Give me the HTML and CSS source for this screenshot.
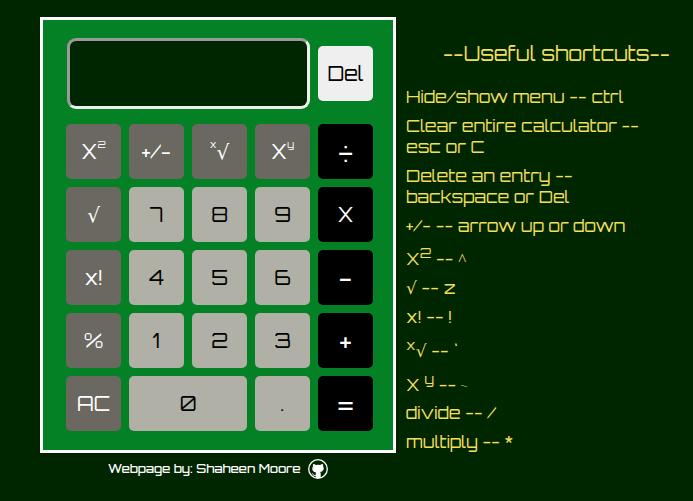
FILE: index.html
```html
<!DOCTYPE html>
<html lang="en">
<head>
<meta charset="utf-8">
<title>Calculator</title>
<link rel="stylesheet" href="styles.css">
</head>
<body>
<main class="page">
  <section class="left">
    <div class="calculator">
      <div class="top"><div class="display"></div><button class="key del">Del</button></div>
      <div class="keys">
        <button class="key fn"><span>X<sup>2</sup></span></button>
        <button class="key fn">+/-</button>
        <button class="key fn"><span><sup>x</sup>√</span></button>
        <button class="key fn"><span>X<sup>y</sup></span></button>
        <button class="key op big">÷</button>
        <button class="key fn">√</button>
        <button class="key num">7</button>
        <button class="key num">8</button>
        <button class="key num">9</button>
        <button class="key op">X</button>
        <button class="key fn">x!</button>
        <button class="key num">4</button>
        <button class="key num">5</button>
        <button class="key num">6</button>
        <button class="key op big">-</button>
        <button class="key fn">%</button>
        <button class="key num">1</button>
        <button class="key num">2</button>
        <button class="key num">3</button>
        <button class="key op big">+</button>
        <button class="key fn">AC</button>
        <button class="key num zero">0</button>
        <button class="key num">.</button>
        <button class="key op big">=</button>
      </div>
    </div>
    <footer class="credit"><span class="author">Webpage by: Shaheen Moore</span>
      <svg class="github" viewBox="0 0 20 20" aria-hidden="true"><circle cx="10" cy="10" r="9.3"/><path d="M5.2 4.900c1 0 1.900.4 2.600 1a10 10 0 0 1 4.400 0c.7-.6 1.600-1 2.600-1 .4 1 .4 1.600.2 2.200 1.600 2.500.6 5.500-2.900 5.900.5.500.6 1 .6 1.700V19H7.700v-2.200c-1.700.3-2.500-.3-3.100-1.500-.3-.6-.7-.9-1.100-1.100.9-.2 1.600.3 2.200 1.200.5.700 1.200.8 2 .5 0-.8.100-1.900.5-2.400-3.600-.4-4.900-3.400-3.200-5.900-.2-.8-.2-1.500.2-2.700Z"/></svg>
    </footer>
  </section>
  <aside class="shortcuts">
    <h1>--Useful shortcuts--</h1>
    <p>Hide/show menu -- ctrl</p>
    <p class="double">Clear entire calculator --<br>esc or C</p>
    <p class="double">Delete an entry --<br>backspace or Del</p>
    <p>+/- -- arrow up or down</p>
    <p class="square">X<sup>2</sup> -- <span class="caret">^</span></p>
    <p>√ -- z</p>
    <p>x! -- !</p>
    <p class="nth-root"><sup>x</sup>√ -- `</p>
    <p class="power">X <sup>y</sup> -- ~</p>
    <p>divide -- /</p>
    <p>multiply -- *</p>
  </aside>
</main>
</body>
</html>
```
FILE: styles.css
```css
* { box-sizing: border-box; }
body { margin: 0; background: #002600; color: #fff; font-family: Orbitron, "DejaVu Sans", sans-serif; }
.page { display: flex; height: 501px; overflow: hidden; padding: 17px 0 0 40px; }
.left { width: 356px; flex: none; }
.calculator { height: 436px; border: 3px solid #fff; background: #058125; padding: 18px 20px 0 23px; }
.top { display: flex; gap: 8px; align-items: center; height: 71px; padding-left: 1px; margin-bottom: 15px; }
.display { width: 243px; height: 71px; border: 3px inset #eee; border-radius: 9px; background: #002600; }
.keys { display: grid; grid-template-columns: repeat(5, 55px); grid-auto-rows: 55px; gap: 8px; }
.key { width: 55px; height: 55px; padding: 0; border: 0; border-radius: 5px; font: 400 20px Orbitron, "DejaVu Sans", sans-serif; display: flex; align-items: center; justify-content: center; line-height: 25px; }
.key sup { font-size: 10px; line-height: 0; vertical-align: 11px; }
.del { background: #efefef; color: #000; }
.fn { background: #6b6761; color: #fff; }
.num { background: #b0b0a6; color: #000; }
.op { background: #000; color: #fff; }
.big { font-size: 27px; padding-top: 2px; }
.zero { grid-column: span 2; width: 118px; }
.credit { display: flex; align-items: center; height: 31px; padding-left: 68px; gap: 7px; font-size: 12px; font-weight: 500; }
.author { width: 193px; white-space: nowrap; }
.github { width: 20px; height: 20px; fill: #fff; }
.github circle { fill: none; stroke: #fff; stroke-width: 1.3; }
.shortcuts { width: 297px; padding: 23px 0 0 10px; color: #f2df5a; font-size: 17px; line-height: 21px; white-space: nowrap; }
h1 { font-size: 20px; font-weight: 400; line-height: 27px; margin: 0 0 19px 37px; }
p { margin: 0 0 8px; height: 21px; }
.double { height: 42px; }
.shortcuts sup { line-height: 0; font-size: 14px; vertical-align: 7px; }
.square { margin-top: 12px; }
.caret { font-family: "Liberation Serif", serif; line-height: 0; }
.nth-root { margin-top: 13px; }
.power { margin-top: 13px; margin-bottom: 7px; }
```
